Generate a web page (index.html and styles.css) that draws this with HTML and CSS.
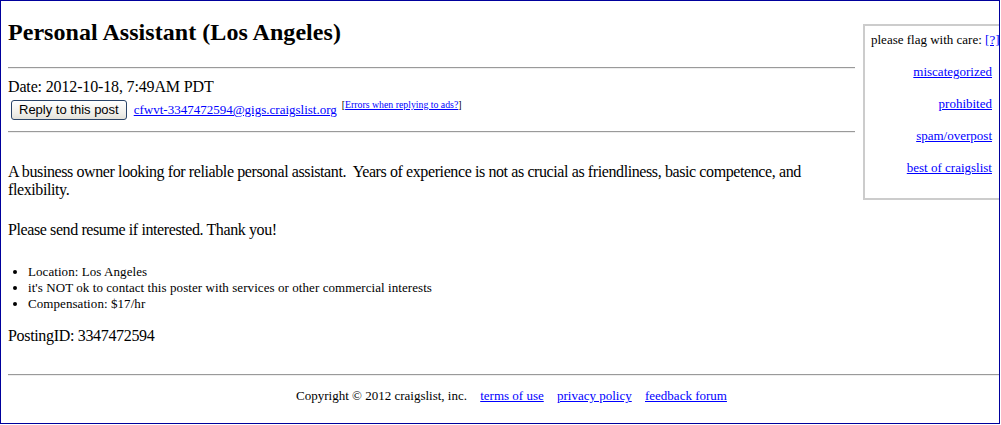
FILE: index.html
```html
<!DOCTYPE html>
<html>
<head>
<meta charset="utf-8">
<title>Personal Assistant (Los Angeles)</title>
<link rel="stylesheet" href="styles.css">
</head>
<body>
<div class="frame">
  <div class="page">
    <div class="top">
      <div class="main">
        <h2 class="title">Personal Assistant (Los Angeles)</h2>
        <hr class="rule rule-first">
        <div class="date">Date: 2012-10-18, 7:49AM PDT</div>
        <div class="reply-row">
          <button class="reply-btn" type="button">Reply to this post</button>
          <a class="email" href="#">cfwvt-3347472594@gigs.craigslist.org</a>
          <sup class="errors">[<a href="#">Errors when replying to ads?</a>]</sup>
        </div>
        <hr class="rule rule-second">
        <div class="body-text">A business owner looking for reliable personal assistant.&nbsp; Years of experience is not as crucial as friendliness, basic competence, and flexibility.</div>
        <div class="body-text thanks">Please send resume if interested. Thank you!</div>
        <ul class="facts">
          <li>Location: Los Angeles</li>
          <li>it's NOT ok to contact this poster with services or other commercial interests</li>
          <li>Compensation: $17/hr</li>
        </ul>
        <div class="posting-id">PostingID: 3347472594</div>
      </div>
      <div class="flagbox">
        <div class="flag-head">please flag with care: <a href="#">[?]</a></div>
        <a class="flag-link" href="#">miscategorized</a>
        <a class="flag-link" href="#">prohibited</a>
        <a class="flag-link" href="#">spam/overpost</a>
        <a class="flag-link" href="#">best of craigslist</a>
      </div>
    </div>
    <hr class="rule rule-footer">
    <div class="footer">
      <span>Copyright &copy; 2012 craigslist, inc.</span>
      <a href="#">terms of use</a>
      <a href="#">privacy policy</a>
      <a href="#">feedback forum</a>
    </div>
  </div>
</div>
</body>
</html>
```

FILE: styles.css
```css
html, body {
  margin: 0;
  padding: 0;
  background: #ffffff;
}

body {
  font-family: "Liberation Serif", "Times New Roman", serif;
  color: #000000;
  font-size: 16px;
}

a {
  color: #0000ff;
  text-decoration: underline;
}

.frame {
  width: 998px;
  height: 422px;
  border: 1px solid #00009c;
  overflow: hidden;
  background: #ffffff;
}

.page {
  width: 1007px;
  padding: 7px 0 0 7px;
}

.top {
  display: flex;
  align-items: flex-start;
  gap: 8px;
}

.main {
  width: 847px;
  flex: none;
}

.title {
  font-size: 24px;
  font-weight: bold;
  line-height: 27.6px;
  margin: 11px 0 0 0;
  letter-spacing: 0.05px;
}

.rule {
  height: 0;
  border: 0;
  border-top: 1px solid #9a9a9a;
  border-bottom: 1px solid #eeeeee;
  margin: 0;
}

.rule-first {
  margin: 20px 0 9px 0;
}

.date {
  font-size: 16px;
  line-height: 18.4px;
  letter-spacing: -0.15px;
}

.reply-row {
  display: flex;
  align-items: baseline;
  height: 20px;
  margin-top: 4px;
}

.reply-btn {
  font-family: "Liberation Sans", Arial, sans-serif;
  font-size: 13px;
  line-height: 15px;
  height: 20px;
  padding: 1px 7px 2px 7px;
  margin: 0 0 0 3px;
  border: 1px solid #2a4468;
  border-radius: 3px;
  background: linear-gradient(#ffffff, #efeee9 70%, #e2e1da);
  color: #000000;
}

.email {
  font-size: 13px;
  margin-left: 7px;
}

.errors {
  font-size: 9.8px;
  margin-left: 5px;
  position: relative;
  top: -6px;
  vertical-align: baseline;
}

.rule-second {
  margin: 11px 0 0 0;
}

.body-text {
  font-size: 16px;
  line-height: 18.4px;
  margin-top: 29.6px;
  letter-spacing: -0.4px;
}

.thanks {
  margin-top: 22px;
}

.facts {
  font-size: 13px;
  line-height: 16px;
  margin: 24px 0 0 0;
  padding-left: 20px;
  letter-spacing: 0.07px;
}

.posting-id {
  font-size: 16px;
  line-height: 18.4px;
  margin-top: 15px;
  letter-spacing: -0.33px;
}

.flagbox {
  flex: none;
  width: 136px;
  margin-top: 16px;
  border: 2px solid #cccccc;
  padding: 6px 6px 23px 6px;
  font-size: 13px;
  line-height: 15px;
  display: flex;
  flex-direction: column;
}

.flag-head {
  white-space: nowrap;
}

.flag-link {
  align-self: flex-end;
  margin-top: 17px;
  margin-right: 15px;
}

.rule-footer {
  margin: 29px 0 0 0;
}

.footer {
  font-size: 13px;
  line-height: 15px;
  margin-top: 12px;
  text-align: center;
}

.footer a {
  margin-left: 10px;
}
```
